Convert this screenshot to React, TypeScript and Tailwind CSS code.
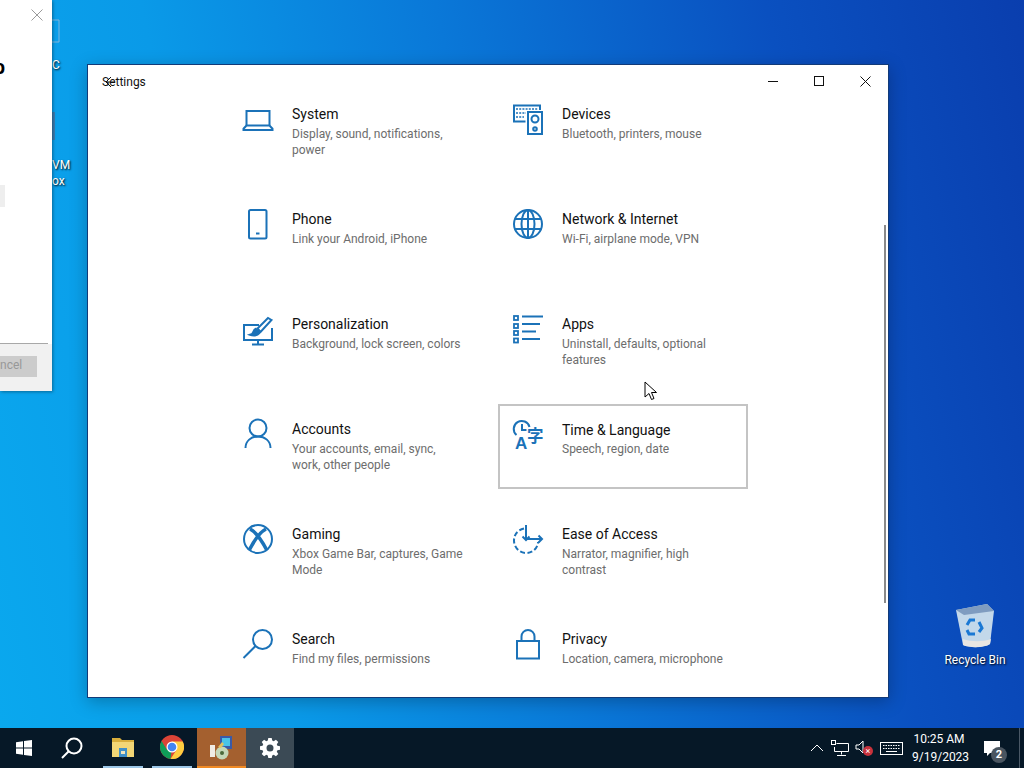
import type { ReactNode } from "react";

const BLUE = "#1b72b8";

const icon = (children: ReactNode) => (
  <svg width="32" height="32" viewBox="0 0 32 32" fill="none" stroke={BLUE} strokeWidth="2" className="shrink-0 overflow-visible">
    {children}
  </svg>
);

const TILES = [
  {
    title: "System",
    desc: "Display, sound, notifications, power",
    icon: icon(
      <>
        <path d="M4.500 22.500V8h23v14.500" />
        <path d="M4.500 22.500l-3 3.200v1.300h29v-1.300l-3-3.200z" />
      </>
    ),
  },
  {
    title: "Devices",
    desc: "Bluetooth, printers, mouse",
    icon: icon(
      <>
        <path d="M13.500 18.500H2V2.500h26V7" />
        <rect x="16" y="9" width="14" height="22" />
        <circle cx="23" cy="16" r="3.500" />
        <circle cx="23" cy="26" r="1.800" />
        <path d="M4 6h22M4 10h10M4 14h8" strokeDasharray="2 1.200" strokeWidth="1.600" />
      </>
    ),
  },
  {
    title: "Phone",
    desc: "Link your Android, iPhone",
    icon: icon(
      <>
        <rect x="7" y="2" width="17.500" height="28.500" rx="1.500" />
        <path d="M14 25.500h3.500" />
      </>
    ),
  },
  {
    title: "Network & Internet",
    desc: "Wi-Fi, airplane mode, VPN",
    icon: icon(
      <>
        <circle cx="16" cy="16" r="14" />
        <ellipse cx="16" cy="16" rx="6.500" ry="14" />
        <path d="M16 2v28M3 11h26M3 21h26" />
      </>
    ),
  },
  {
    title: "Personalization",
    desc: "Background, lock screen, colors",
    icon: icon(
      <>
        <path d="M17 12H2v15h28V15" />
        <path d="M16 27v4M10 31.500h12" />
        <path d="M29.500 7L26 5 15.500 15.500l3 3.500z" />
        <path d="M14.500 15.500c-2.500.5-3 2.500-3.500 4-.4 1.200-1.500 1.800-3 2.300 3 1 7.500 1 9-1.300.8-1.300.5-2.300-.5-3.300" fill={BLUE} />
      </>
    ),
  },
  {
    title: "Apps",
    desc: "Uninstall, defaults, optional features",
    icon: icon(
      <>
        <rect x="2" y="3" width="4" height="4" strokeWidth="1.800" />
        <rect x="2" y="11" width="4" height="4" strokeWidth="1.800" />
        <rect x="2" y="18" width="4" height="4" strokeWidth="1.800" />
        <rect x="2" y="25.500" width="4" height="4" strokeWidth="1.800" />
        <path d="M10 3.500h21M10 11h18M10 18.500h14M10 26h18" />
      </>
    ),
  },
  {
    title: "Accounts",
    desc: "Your accounts, email, sync, work, other people",
    icon: icon(
      <>
        <circle cx="16" cy="10" r="8.500" />
        <path d="M3.500 30c0-7 5.500-11.500 12.500-11.500S28.500 23 28.500 30" />
      </>
    ),
  },
  {
    title: "Time & Language",
    desc: "Speech, region, date",
    focused: true,
    icon: icon(
      <>
        <path d="M4.500 17a8 8 0 1 1 13-8" />
        <path d="M10 6v6h4.500" />
        <text x="3" y="31" fontFamily="'Liberation Sans',sans-serif" fontSize="17" fontWeight="700" fill={BLUE} stroke="none">
          A
        </text>
        <text x="15" y="24" fontFamily="'Noto Sans CJK JP',sans-serif" fontSize="16.500" fontWeight="700" fill={BLUE} stroke="none">
          字
        </text>
      </>
    ),
  },
  {
    title: "Gaming",
    desc: "Xbox Game Bar, captures, Game Mode",
    icon: icon(
      <>
        <circle cx="16" cy="16" r="14" />
        <path d="M8 6c5 2.500 11 10 17 21.500M24 6C19 8.500 13 16 7 27.500" strokeWidth="3.500" />
      </>
    ),
  },
  {
    title: "Ease of Access",
    desc: "Narrator, magnifier, high contrast",
    icon: icon(
      <>
        <path d="M12 5.500C6 7 2 11 2 17.500c0 7 5.500 12.500 12 12.500s12-5 12-11" strokeDasharray="5 2.500" />
        <path d="M14 2v15M10.500 13.500L14 17l3.500-3.500" />
        <path d="M14 16h16M26.500 12.500L30 16l-3.500 3.500" />
      </>
    ),
  },
  {
    title: "Search",
    desc: "Find my files, permissions",
    icon: icon(
      <>
        <circle cx="20.500" cy="11.500" r="9.500" />
        <path d="M13.500 18L1.500 30" />
      </>
    ),
  },
  {
    title: "Privacy",
    desc: "Location, camera, microphone",
    icon: icon(
      <>
        <rect x="5" y="13" width="22" height="17.500" />
        <path d="M9.500 13V8.500a6.500 6.500 0 0 1 13 0V13" />
      </>
    ),
  },
];

function Tile({ title, desc, icon, focused }: { title: string; desc: string; icon: ReactNode; focused?: boolean }) {
  return (
    <div className={`h-[85px] border-2 p-[12px] flex gap-[18px] ${focused ? "border-[#c4c4c4]" : "border-transparent"}`}>
      {icon}
      <div className="min-w-0 flex-1 pt-px">
        <div className={`text-[14px] leading-[20px] text-[#111] ${focused ? "mt-px -mb-px" : ""}`}>{title}</div>
        <div className="mt-[2px] text-[12px] leading-[16px] text-[#6d6d6d]">{desc}</div>
      </div>
    </div>
  );
}

function SettingsWindow() {
  return (
    <div className="absolute left-[87px] top-[64px] w-[802px] h-[634px] border border-[#123a78] bg-white overflow-hidden shadow-[0_4px_16px_rgba(0,0,0,0.25)]">
      <div className="h-[24px] flex items-start">
        <div className="relative ml-[14px] mt-[9px] text-[12px] leading-[16px] text-[#111]">
          Settings
          <svg width="12" height="12" viewBox="0 0 12 12" fill="none" stroke="#111" strokeWidth="1" className="absolute left-[3px] top-[2px]">
            <path d="M10 6H1M6 1L1 6l5 5" />
          </svg>
        </div>
        <div className="ml-auto flex">
          <div className="w-[46px] h-[32px] flex items-center justify-center">
            <svg width="10" height="10" viewBox="0 0 10 10" stroke="#111">
              <path d="M0 5.500h10" />
            </svg>
          </div>
          <div className="w-[46px] h-[32px] flex items-center justify-center">
            <svg width="10" height="10" viewBox="0 0 10 10" fill="none" stroke="#111">
              <rect x="0.500" y="0.500" width="9" height="9" />
            </svg>
          </div>
          <div className="w-[46px] h-[32px] flex items-center justify-center">
            <svg width="11" height="11" viewBox="0 0 11 11" stroke="#111">
              <path d="M0.500 0.500l10 10M10.500 0.500l-10 10" />
            </svg>
          </div>
        </div>
      </div>
      <div className="flex">
        <div className="ml-[140px] grid grid-cols-[250px_250px] gap-x-[20px] gap-y-[20px]">
          {TILES.map((t) => (
            <Tile key={t.title} title={t.title} desc={t.desc} icon={t.icon} focused={t.focused} />
          ))}
        </div>
        <div className="ml-auto mr-[2px] mt-[136px] w-[2px] h-[378px] bg-[#8a8a8a]" />
      </div>
    </div>
  );
}

function Installer() {
  return (
    <div className="absolute left-0 top-0 w-[52px] h-[391px] bg-white flex flex-col overflow-hidden shadow-[1px_1px_3px_rgba(0,0,0,0.35)]">
      <div className="h-[343px] relative">
        <svg width="12" height="12" viewBox="0 0 12 12" stroke="#9a9a9a" className="absolute left-[31px] top-[9px]">
          <path d="M0.500 0.500l11 11M11.500 0.500l-11 11" />
        </svg>
        <div className="absolute right-[47px] top-[55px] text-[20px] leading-[24px] font-bold text-black">p</div>
        <div className="absolute left-0 top-[185px] w-[5px] h-[22px] bg-[#eeeeee]" />
      </div>
      <div className="h-px bg-[#a8a8a8] mr-[4px]" />
      <div className="flex-1 bg-[#f1f1f1] pt-[12px]">
        <div className="w-[37px] h-[21px] bg-[#cccccc] text-[12px] leading-[19px] text-[#989898] text-right pr-[20px] overflow-hidden">
          ncel
        </div>
      </div>
    </div>
  );
}

function DesktopLeftovers() {
  return (
    <>
      <svg width="10" height="34" viewBox="0 0 10 34" fill="none" stroke="#7fb4dc" className="absolute left-[52px] top-[18px]">
        <path d="M0 2h7v22H0" />
      </svg>
      <div className="absolute left-[52px] top-[57px] text-[12px] leading-[16px] text-white [text-shadow:1px_1px_2px_#000]">C</div>
      <div className="absolute left-[52px] top-[112px] w-[3px] h-[28px] bg-[#6a5a78] opacity-50" />
      <div className="absolute left-[52px] top-[157px] text-[12px] leading-[16px] text-white [text-shadow:1px_1px_2px_#000]">VM</div>
      <div className="absolute left-[52px] top-[173px] text-[12px] leading-[16px] text-white [text-shadow:1px_1px_2px_#000]">ox</div>
    </>
  );
}

function RecycleBin() {
  return (
    <div className="absolute left-[935px] top-[603px] w-[80px] flex flex-col items-center">
      <svg width="42" height="46" viewBox="0 0 42 46">
        <path d="M2 7L33 1l7 7-4 33c-6 4-21 4-27 1z" fill="#c3d8ea" />
        <path d="M2 7L33 1l7 7-30 4z" fill="#7f9cc0" />
        <path d="M9 36c8 3 20 3 28 0l-1 5c-6 4-20 4-27 1z" fill="#e9e6e2" />
        <g fill="none" stroke="#1a78d4" strokeWidth="3">
          <path d="M13 22l3-5h5" />
          <path d="M25 19l3 6-3 4" />
          <path d="M21 31h-6l-2-4" />
        </g>
      </svg>
      <div className="mt-[3px] text-[12px] leading-[16px] text-white [text-shadow:1px_1px_2px_#000]">Recycle Bin</div>
    </div>
  );
}

function Cursor() {
  return (
    <svg width="14" height="20" viewBox="0 0 14 20" className="absolute left-[644px] top-[381px]">
      <path d="M1 1v15l4-3.500 2.500 6 2.500-1-2.500-6H12.500z" fill="#fff" stroke="#000" strokeWidth="1" strokeLinejoin="round" />
    </svg>
  );
}

function Taskbar() {
  return (
    <div className="h-[40px] bg-[#061827] flex items-stretch shrink-0 text-white">
      <div className="w-[48px] flex items-center justify-center">
        <svg width="16" height="16" viewBox="0 0 16 16" fill="#fff">
          <path d="M0 2.200l7-1v6.300H0zM8 1l8-1v7.500H8zM0 8.500h7v6.300l-7-1zM8 8.500h8V16l-8-1z" />
        </svg>
      </div>
      <div className="w-[48px] flex items-center justify-center">
        <svg width="22" height="22" viewBox="0 0 22 22" fill="none" stroke="#fff" strokeWidth="2">
          <circle cx="13" cy="9" r="7.500" />
          <path d="M7.500 14.500L1 21" />
        </svg>
      </div>
      <div className="w-[50px] ml-[2px] flex flex-col items-center">
        <div className="flex-1 flex items-center justify-center">
          <svg width="22" height="20" viewBox="0 0 22 20">
            <path d="M0 1h8l2 2h12v3H0z" fill="#d8ae3c" />
            <path d="M0 5h22v15H0z" fill="#f2d676" />
            <path d="M7 11h8v9H7z" fill="#3f8fc8" />
            <path d="M9 14h4v3H9z" fill="#f0e6c0" />
          </svg>
        </div>
        <div className="w-[40px] h-[2px] bg-[#9cc7e8]" />
      </div>
      <div className="w-[48px] flex flex-col items-center">
        <div className="flex-1 flex items-center justify-center">
          <svg width="24" height="24" viewBox="0 0 24 24">
            <circle cx="12" cy="12" r="12" fill="#db4437" />
            <path d="M12 12L10.500 23.900A12 12 0 0 1 1.600 6L7 15z" fill="#0f9d58" />
            <path d="M12 6.500h10.700A12 12 0 0 1 10.500 23.900L16.500 15z" fill="#ffcd40" />
            <circle cx="12" cy="12" r="5.500" fill="#fff" />
            <circle cx="12" cy="12" r="4.300" fill="#4285f4" />
          </svg>
        </div>
        <div className="w-[40px] h-[2px] bg-[#9cc7e8]" />
      </div>
      <div className="w-[49px] ml-[1px] bg-[#a4602f] flex flex-col">
        <div className="flex-1 flex items-center justify-center">
          <svg width="26" height="26" viewBox="0 0 26 26">
            <path d="M11 2h12v13H11z" fill="#3a5aa8" />
            <path d="M13 4h8v8h-8z" fill="#49c3e8" />
            <path d="M1 11h5v12H1z" fill="#f0ece4" />
            <circle cx="13" cy="19" r="6.500" fill="#c4d8b8" />
            <circle cx="13" cy="19" r="2" fill="#4a6a3a" />
            <path d="M9 13l4-5 2 2-3 4z" fill="#e0c060" />
          </svg>
        </div>
        <div className="h-[2px] bg-[#f08a24]" />
      </div>
      <div className="w-[48px] bg-[#3b4a55] flex items-center justify-center">
        <svg width="20" height="20" viewBox="0 0 20 20" fill="#fff" fillRule="evenodd">
          <path d="M8.300 0h3.400l.5 2.600 1.500.6 2.200-1.500 2.400 2.400-1.500 2.200.6 1.500 2.600.5v3.400l-2.600.5-.6 1.500 1.500 2.200-2.400 2.400-2.200-1.500-1.500.6-.5 2.600H8.300l-.5-2.600-1.500-.6-2.200 1.500-2.400-2.400 1.500-2.200-.6-1.500L0 11.700V8.300l2.600-.5.6-1.500-1.500-2.200 2.400-2.400 2.200 1.500 1.500-.6zM10 6.500a3.500 3.500 0 1 0 0 7 3.500 3.500 0 0 0 0-7z" />
        </svg>
      </div>

      <div className="ml-auto flex items-center">
        <svg width="14" height="8" viewBox="0 0 14 8" fill="none" stroke="#fff" className="mr-[7px]">
          <path d="M1 7l6-6 6 6" />
        </svg>
        <svg width="18" height="16" viewBox="0 0 18 16" fill="none" stroke="#fff" className="mr-[6px]">
          <path d="M5.500 3.500h12v8h-14V7" />
          <rect x="0.500" y="0.500" width="4" height="4" />
          <path d="M10.500 11.500v3M6 15.500h9" />
        </svg>
        <div className="relative w-[18px] h-[16px] mr-[7px]">
          <svg width="12" height="14" viewBox="0 0 12 14" fill="none" stroke="#fff">
            <path d="M1 5h3l4-4v12l-4-4H1z" />
          </svg>
          <div className="absolute left-[8px] top-[6px] w-[10px] h-[10px] rounded-full bg-[#c8323c] text-[9px] leading-[10px] text-white text-center">×</div>
        </div>
        <svg width="23" height="13" viewBox="0 0 23 13" fill="none" stroke="#fff" className="mr-[9px]">
          <rect x="0.500" y="0.500" width="22" height="12" />
          <path d="M3 3.500h17M3 6.500h17" strokeDasharray="1.500 1" />
          <path d="M6 9.500h11" />
        </svg>
        <div className="w-[54px] text-center text-[12px] leading-[18px] whitespace-nowrap">
          <div>10:25 AM</div>
          <div>9/19/2023</div>
        </div>
        <div className="relative w-[36px] h-[32px] ml-[10px]">
          <svg width="16" height="16" viewBox="0 0 16 16" fill="#fff" className="absolute left-[8px] top-[9px]">
            <path d="M0 0h16v12H6l-3 3v-3H0z" />
          </svg>
          <div className="absolute left-[15px] top-[15px] w-[16px] h-[16px] rounded-full bg-[#4a5560] text-[11px] leading-[16px] text-white text-center font-bold">2</div>
        </div>
        <div className="w-px h-full bg-[#4a5866] ml-[7px] mr-[4px]" />
      </div>
    </div>
  );
}

export default function App() {
  return (
    <div className="h-screen w-screen overflow-hidden flex flex-col font-['Roboto','Noto_Sans',sans-serif]">
      <div className="relative flex-1 bg-[linear-gradient(78deg,#0aa8ee_0%,#0a9ae8_25%,#0a78d8_50%,#0a50c0_78%,#0a3eae_100%)]">
        <DesktopLeftovers />
        <Installer />
        <RecycleBin />
        <SettingsWindow />
        <Cursor />
      </div>
      <Taskbar />
    </div>
  );
}
